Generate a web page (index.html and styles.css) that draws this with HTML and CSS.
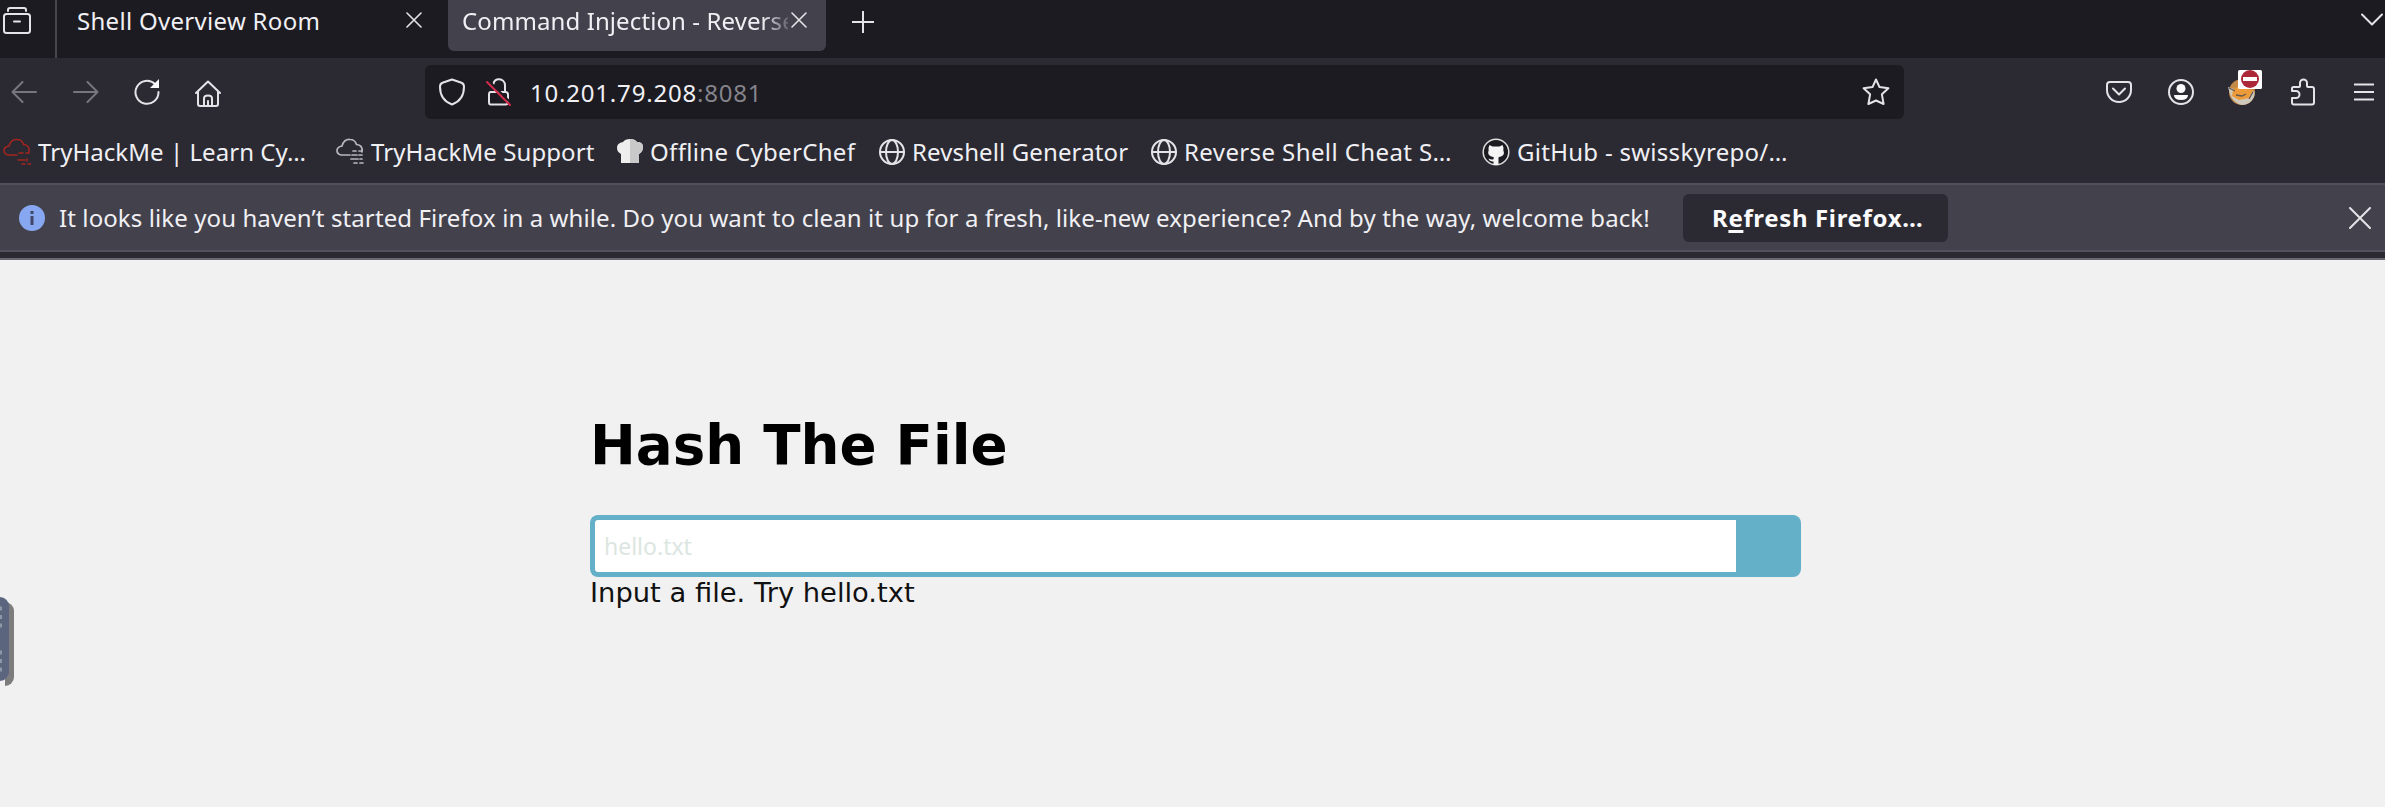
FILE: index.html
```html
<!DOCTYPE html>
<html lang="en">
<head>
<meta charset="utf-8">
<title>Command Injection - Reverse Shell</title>
<link rel="stylesheet" href="styles.css">
</head>
<body>
<header class="chrome">
  <div class="tabs">
    <div class="recent"><svg class="icon" width="28" height="28" viewBox="0 0 28 28"><path d="M5 4V3q0-2 2-2h14q2 0 2 2v1M3.500 7h21q2.500 0 2.500 2.500v14q0 2.500-2.500 2.500h-21Q1 26 1 23.500v-14Q1 7 3.500 7zM11 14.500h6"/></svg></div>
    <div class="tab tab-room"><span class="t t-room">Shell Overview Room</span><svg class="icon x" width="16" height="16" viewBox="0 0 16 16"><path d="M1 1l14 14M15 1L1 15"/></svg></div>
    <div class="tab tab-active"><span class="t t-cmd">Command Injection - Reverse</span><svg class="icon x" width="16" height="16" viewBox="0 0 16 16"><path d="M1 1l14 14M15 1L1 15"/></svg></div>
    <svg class="icon plus" width="22" height="22" viewBox="0 0 22 22"><path d="M11 .5v21M.5 11h21"/></svg>
    <svg class="icon chevron" width="22" height="14" viewBox="0 0 22 14"><path d="M1 1.500l10 10 10-10"/></svg>
  </div>
  <nav class="toolbar">
    <svg class="icon dim back" width="26" height="22" viewBox="0 0 26 22"><path d="M25 11H1.500M11.500 1l-10 10 10 10"/></svg>
    <svg class="icon dim fwd" width="26" height="22" viewBox="0 0 26 22"><path d="M1 11h23.500M14.500 1l10 10-10 10"/></svg>
    <svg class="icon reload" width="26" height="26" viewBox="0 0 26 26"><path d="M21 5A11.500 11.500 0 1 0 24.500 13"/><path class="solid" d="M25 0v9h-9z"/></svg>
    <svg class="icon home" width="26" height="27" viewBox="0 0 26 27"><path d="M1 13L13 1.500 25 13M3 11.500V24q0 2 2 2h16q2 0 2-2V11.500M9 26v-7.500q0-3 4-3t4 3V26M13 21v5"/></svg>
    <div class="urlbar">
      <svg class="icon" width="26" height="28" viewBox="0 0 26 28"><path d="M13 1.500l9.500 3.300q2.500 1 2.500 4C25 18 20 24 13 26.500 6 24 1 18 1 8.800q0-3 2.500-4z"/></svg>
      <svg class="icon lock" width="26" height="28" viewBox="0 0 26 28"><path d="M4.500 14h15q2.500 0 2.500 2.500V24q0 2.500-2.500 2.500h-15Q3 26.500 3 24v-7.500Q3 14 4.500 14zM19 14V7.500C19 -.5 7.500-.5 7.500 6"/><path class="gap" d="M2 2l24 24"/><path class="slash" d="M1 4l23 23"/></svg>
      <span class="t t-url">10.201.79.208<span class="port">:8081</span></span>
      <svg class="icon star" width="28" height="28" viewBox="0 0 28 28"><path d="M14 1.500l3.500 7.600 8.900 1.200-6.500 6 1.700 9.700-7.600-3.500L6.400 26l1.700-9.700-6.500-6 8.900-1.200z"/></svg>
    </div>
    <div class="actions">
      <svg class="icon" width="26" height="22" viewBox="0 0 26 22"><path d="M4 1h18q3 0 3 3v5a12 12 0 0 1-24 0V4q0-3 3-3zM7 7.500l6 6 6-6"/></svg>
      <svg class="icon" width="26" height="26" viewBox="0 0 26 26"><circle cx="13" cy="13" r="12"/><circle class="solid" cx="13" cy="9.500" r="4.500"/><path class="solid" d="M6 16h14q0 5-7 5t-7-5z"/></svg>
      <svg class="fox" width="36" height="36" viewBox="0 0 36 36"><circle cx="16" cy="22" r="13" fill="#c58a48"/><path d="M2 17l9 3 14 3q5-5 3 4-4 8-12 8-9-2-12-11z" fill="#cfc9bc"/><path d="M7 20l6-4 8 3 6 1-4 8-10 2-7-4z" fill="#ed9a38"/><path d="M3 18l6 3M10 25l6 1 4-2M23 29l4-7" fill="none" stroke="#64584f" stroke-width="1.300"/><rect x="12" width="24" height="19" rx="1.500" fill="#fff"/><circle cx="24" cy="9" r="9" fill="#ac2839"/><rect x="17" y="7" width="14" height="4" fill="#fff"/></svg>
      <svg class="icon puzzle" width="24" height="28" viewBox="0 0 24 28"><path d="M2.500 9H8q1 0 1-1V5a3.500 3.500 0 0 1 7 0v3q0 1 1 1h4q2 0 2 2v13.500q0 2-2 2H3q-2 0-2-2V20h4a3.500 3.500 0 0 0 0-7H1v-2.500Q1 9 2.500 9z"/></svg>
      <svg class="icon menu" width="20" height="18" viewBox="0 0 20 18"><path d="M0 1.500h20M0 9h20M0 16.500h20"/></svg>
    </div>
  </nav>
  <div class="bookmarks">
    <a class="bm bm-1"><svg class="icon red" width="28" height="28" viewBox="0 0 28 28"><path d="M14 17H5Q1 16 1 12.500T6 8q2-7 8-6.500 5 0 6.500 5Q27 7 26 14M16 15h4M23 15h3M15 22h7M24 21v2M19 26h3M25 26h3"/></svg><span class="t">TryHackMe | Learn Cy…</span></a>
    <a class="bm bm-2"><svg class="icon cloud" width="28" height="28" viewBox="0 0 28 28"><path d="M14 17H5Q1 16 1 12.500T6 8q2-7 8-6.500 5 0 6.500 5Q27 7 26 14"/><path d="M17 13h3M23 13h3M16 17h5M23 17h4M15 21h7M24 21h2M18 25h4M24 25h4" stroke-dasharray="3 1"/></svg><span class="t">TryHackMe Support</span></a>
    <a class="bm bm-3"><svg width="26" height="26" viewBox="0 0 26 26"><path d="M4 24v-9Q0 13 0 8.500T6 3q2-3 7-3 5 0 7 3 6 0 6 5t-4 7v9z" fill="#eee"/><path d="M13 0q5 0 7 3 6 0 6 5t-4 7v9h-9z" fill="#c9c9c9"/></svg><span class="t">Offline CyberChef</span></a>
    <a class="bm bm-4"><svg class="icon" width="26" height="26" viewBox="0 0 26 26"><circle cx="13" cy="13" r="12"/><ellipse cx="13" cy="13" rx="6" ry="12"/><path d="M1 13h24"/></svg><span class="t">Revshell Generator</span></a>
    <a class="bm bm-5"><svg class="icon" width="26" height="26" viewBox="0 0 26 26"><circle cx="13" cy="13" r="12"/><ellipse cx="13" cy="13" rx="6" ry="12"/><path d="M1 13h24"/></svg><span class="t">Reverse Shell Cheat S…</span></a>
    <a class="bm bm-6"><svg width="28" height="28" viewBox="0 0 28 28"><circle cx="14" cy="14" r="12.800" fill="#1b1b20" stroke="#ddd" stroke-width="1.500"/><path d="M7.500 7l3 1.500h7l3-1.500q1.500 3 .8 5 2.500 6-4.800 7.300V27h-5v-3.500q-4 .5-5-3 2.500 1.500 5 .8l.3-2Q4.500 18 6.700 12q-.7-2 .8-5z" fill="#f4f4f4"/></svg><span class="t">GitHub - swisskyrepo/…</span></a>
  </div>
  <div class="notice">
    <svg class="info" width="26" height="26" viewBox="0 0 26 26"><circle cx="13" cy="13" r="13" fill="#87a8f0"/><path d="M13 6v3M13 11v9" stroke="#414769" stroke-width="3"/></svg>
    <span class="t t-notice">It looks like you haven’t started Firefox in a while. Do you want to clean it up for a fresh, like-new experience? And by the way, welcome back!</span>
    <button class="refresh"><span class="t t-refresh">R<span class="key">e</span>fresh Firefox…</span></button>
    <svg class="icon close" width="22" height="22" viewBox="0 0 22 22"><path d="M1 1l20 20M21 1L1 21"/></svg>
  </div>
</header>
<main class="page">
  <h1>Hash The File</h1>
  <form class="search">
    <input class="field" type="text" placeholder="hello.txt">
    <button class="go" type="button" aria-label="Submit"></button>
  </form>
  <p class="hint">Input a file. Try hello.txt</p>
  <aside class="handle"><svg width="9" height="84" viewBox="0 0 9 84"><path d="M0 11.500h2M0 20h2M0 28.500h2M0 55.500h2M0 64h2M0 72.500h2" stroke="#8d98a9" stroke-width="4"/></svg></aside>
</main>
</body>
</html>
```
FILE: styles.css
```css
* { box-sizing: border-box; }
body {
  margin: 0;
  height: 807px;
  overflow: hidden;
  background: #f1f1f1;
  color: #000;
  font-family: "Noto Sans", sans-serif;
}
svg { display: block; flex: none; }
.icon { fill: none; stroke: #e4e4e8; stroke-width: 2; stroke-linejoin: round; stroke-linecap: round; }
.icon .solid { fill: #fbfbfe; stroke: none; }
.t { display: block; white-space: nowrap; font-size: 24px; line-height: 32px; flex: none; }

.chrome { height: 260px; background: #2b2a33; color: #f0f0f4; border-bottom: 2px solid #6a6972; }

.tabs { display: flex; height: 58px; background: #1c1b21; }
.recent { width: 57px; padding: 7px 0 0 3px; border-right: 2px solid #47464e; }
.tab { display: flex; align-items: flex-start; }
.tab .t { margin-top: 5px; }
.tab .x { margin-top: 12px; stroke-width: 1.600; }
.tab-room { width: 391px; padding-left: 20px; }
.t-room { width: 329px; letter-spacing: .3px; }
.tab-active { width: 378px; height: 51px; padding-left: 14px; background: #43414b; border-radius: 0 0 6px 6px; }
.t-cmd { width: 326px; margin-right: 3px; overflow: hidden; letter-spacing: .1px; mask-image: linear-gradient(90deg, #000 300px, transparent 332px); }
.plus { margin: 11px 0 0 26px; }
.chevron { margin: 13px 2px 0 auto; }

.toolbar { display: flex; height: 68px; padding-top: 7px; }
.toolbar > .icon { margin-top: 16px; }
.icon.dim { stroke: #77767e; }
.back { margin-left: 11px; }
.fwd { margin-left: 36px; }
.toolbar > .reload { margin: 14px 0 0 35px; }
.toolbar > .home { margin: 15px 0 0 35px; }
.urlbar { display: flex; align-items: center; width: 1479px; height: 54px; margin-left: 204px; padding: 0 14px 0 14px; background: #1c1b21; border-radius: 6px; }
.lock { margin-left: 21px; }
.lock .gap { stroke: #1c1b21; stroke-width: 2; }
.lock .slash { stroke: #d22c4b; }
.t-url { margin: 2px 0 0 18px; letter-spacing: .8px; }
.port { color: #85848c; }
.star { margin-left: auto; }
.actions { display: flex; align-items: center; height: 54px; margin-left: 202px; gap: 36px; }
.fox { margin: -8px -10px 0 -4px; }
.puzzle { margin-left: 3px; }
.menu { margin-left: 3px; }

.bookmarks { display: flex; height: 57px; padding: 10px 0 0 3px; }
.bm { display: flex; align-items: center; height: 32px; gap: 7px; flex: none; }
.bm-1 { width: 333px; letter-spacing: .05px; }
.bm-2 { width: 281px; letter-spacing: .08px; }
.bm-3 { width: 262px; letter-spacing: .33px; }
.bm-4 { width: 272px; letter-spacing: .12px; }
.bm-5 { width: 331px; letter-spacing: .4px; }
.bm-6 { letter-spacing: .28px; }
.red { stroke: #a7241f; stroke-width: 1.500; }
.cloud { stroke: #b9b8be; stroke-width: 1.700; }

.notice { display: flex; align-items: center; height: 69px; padding: 0 14px 0 19px; background: #43414b; border: solid #53525c; border-width: 2px 0; }
.t-notice { width: 1624px; margin-left: 14px; letter-spacing: .1px; }
.refresh { width: 265px; height: 48px; padding: 0; border: 0; border-radius: 6px; background: #2b2a33; color: #fbfbfe; font: inherit; font-weight: 700; text-align: left; }
.t-refresh { margin-left: 29px; letter-spacing: .65px; }
.key { text-decoration: underline; text-decoration-thickness: 3px; text-underline-offset: 3px; text-decoration-skip-ink: none; }
.close { margin-left: auto; }

.page { position: relative; height: 547px; padding: 152px 0 0 590px; font-family: "DejaVu Sans", sans-serif; }
h1 { margin: 0; font-size: 54.700px; line-height: 66px; font-weight: 700; }
.search { display: flex; width: 1211px; height: 62px; margin-top: 37px; }
.field { flex: 1; min-width: 0; padding: 0 9px; border: 5px solid #65b0c9; border-right: 0; border-radius: 8px 0 0 8px; background: #fff; font: 23px "Noto Sans", sans-serif; }
.field::placeholder { color: #dce6e1; opacity: 1; }
.go { width: 65px; border: 0; border-radius: 0 8px 8px 0; background: #65b0c9; }
.hint { margin: 0; font-size: 27.350px; line-height: 32px; color: #111; }
.handle { position: absolute; left: 0; top: 337px; width: 9px; height: 84px; background: #5b667e; border-radius: 0 9px 9px 0; box-shadow: 5px 5px 0 #7d7d7d; }
```
